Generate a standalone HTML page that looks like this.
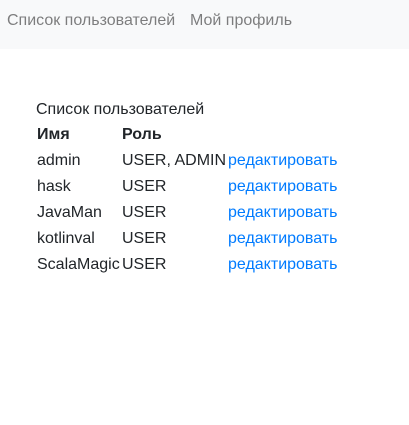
<!DOCTYPE html>
<html><head><meta charset="utf-8"><style>
body{margin:0;font-family:"Liberation Sans",sans-serif;font-size:16px;color:#212529;background:#fff;width:409px;height:425px;overflow:hidden}
.nav{height:49px;background:#f8f9fa;position:relative}
.nav span{position:absolute;top:11px;color:rgba(0,0,0,.5);line-height:20px}
.cap{position:absolute;left:36px;top:100px;line-height:20px}
table{position:absolute;left:36px;top:122px;border-collapse:collapse}
td,th{padding:0 0 0 1px;height:26px;line-height:26px;text-align:left;white-space:nowrap}
th{font-weight:bold}
a{color:#007bff;text-decoration:none}
</style></head><body>
<div class="nav"><span style="left:7px">Список пользователей</span><span style="left:190px">Мой профиль</span></div>
<div class="cap">Список пользователей</div>
<table>
<tr><th style="width:84px">Имя</th><th style="width:105px">Роль</th><th></th></tr>
<tr><td>admin</td><td>USER, ADMIN</td><td><a>редактировать</a></td></tr>
<tr><td>hask</td><td>USER</td><td><a>редактировать</a></td></tr>
<tr><td>JavaMan</td><td>USER</td><td><a>редактировать</a></td></tr>
<tr><td>kotlinval</td><td>USER</td><td><a>редактировать</a></td></tr>
<tr><td>ScalaMagic</td><td>USER</td><td><a>редактировать</a></td></tr>
</table>
</body></html>
